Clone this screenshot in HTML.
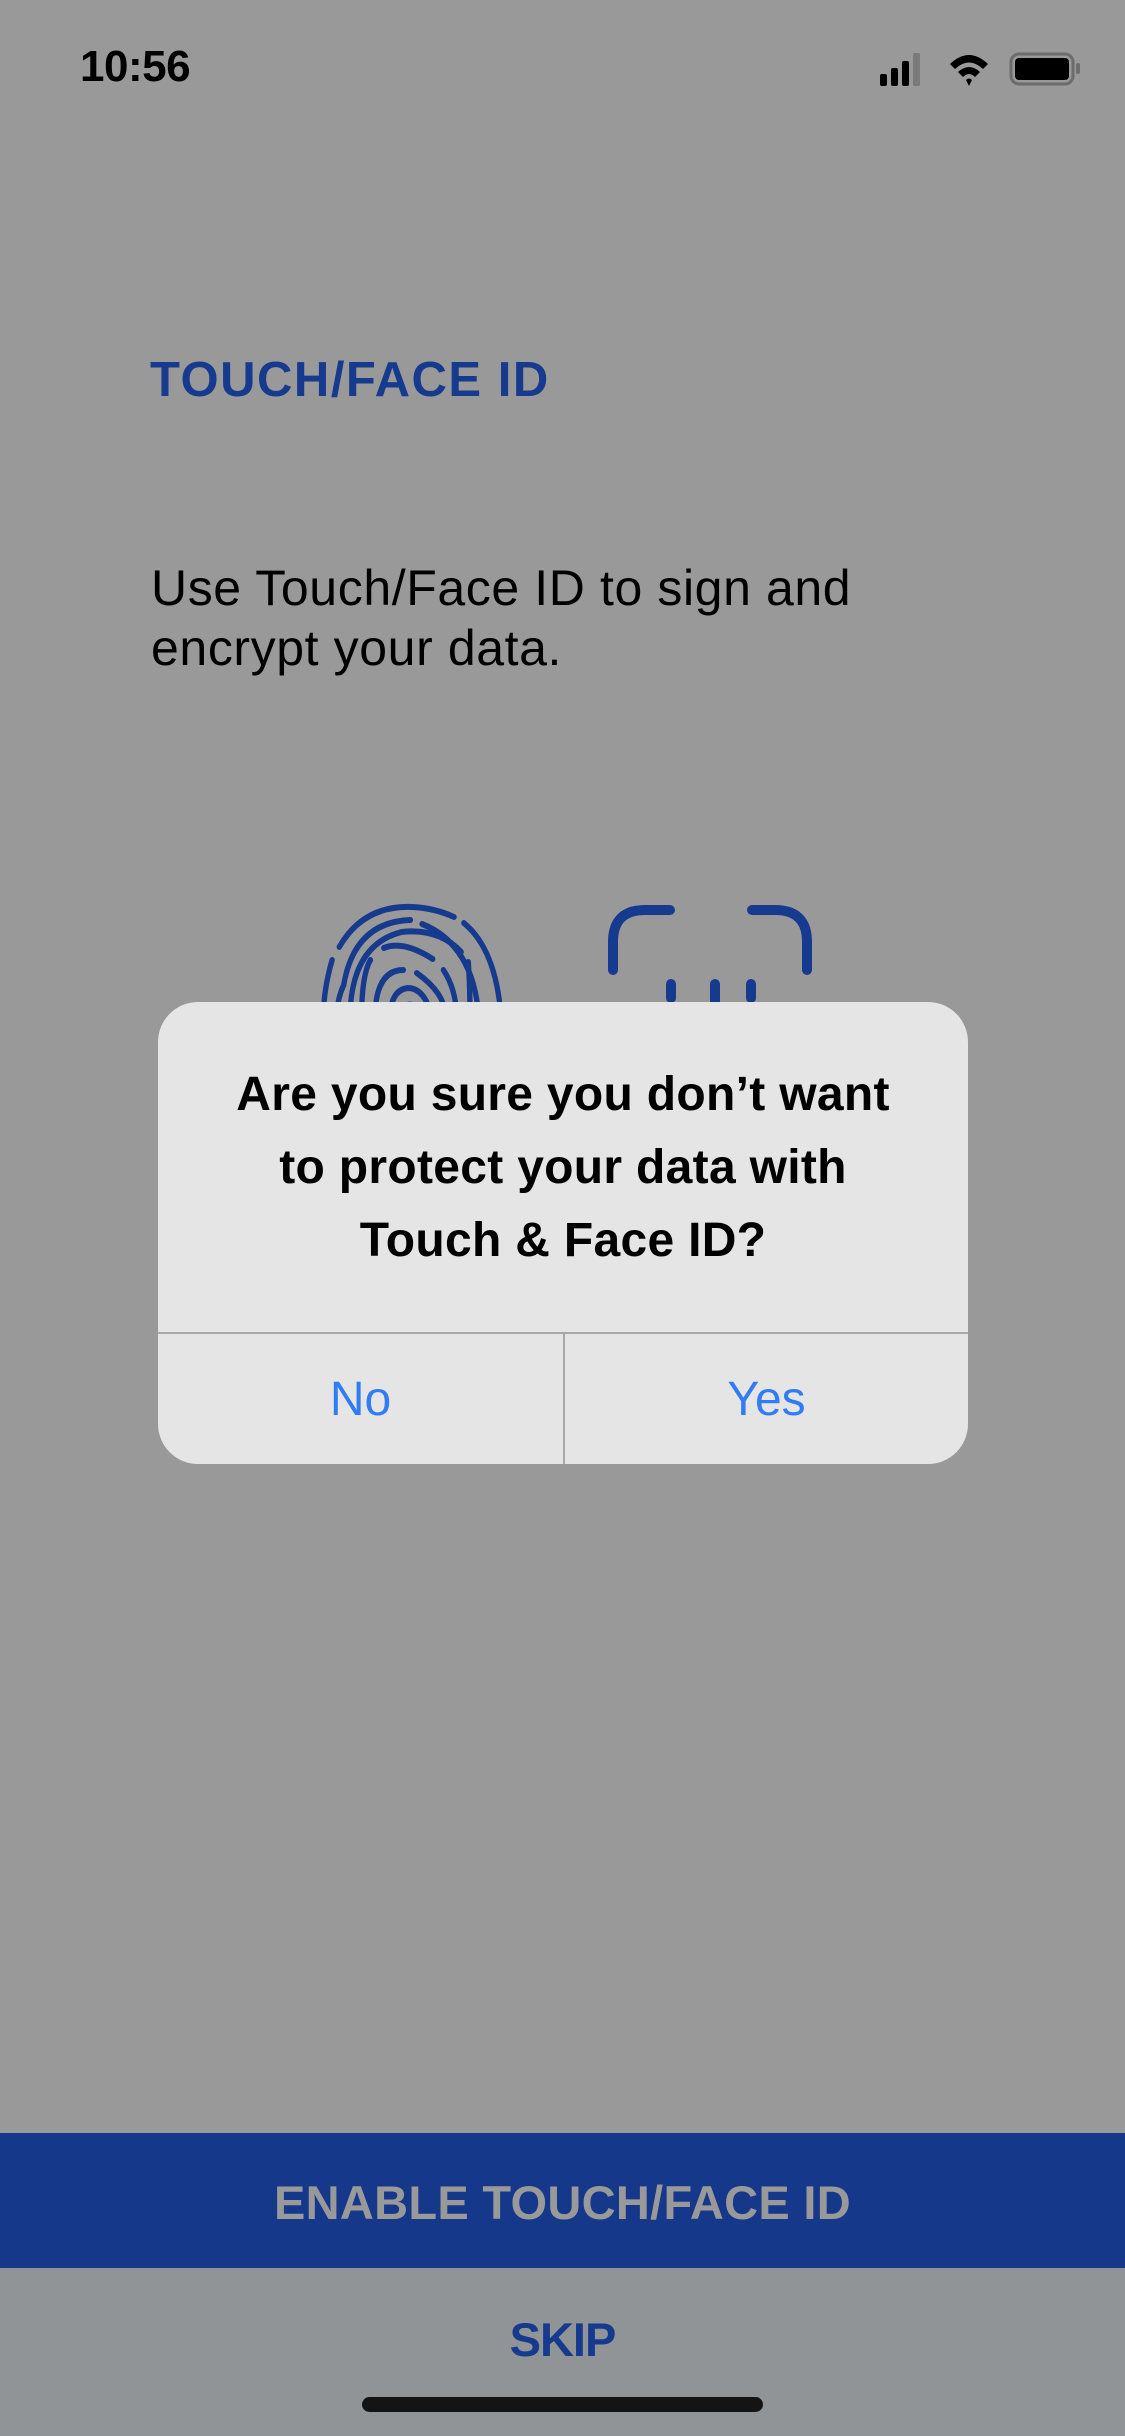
<!DOCTYPE html>
<html><head><meta charset="utf-8"><style>
*{margin:0;padding:0;box-sizing:border-box}
body{width:1125px;height:2436px;background:#999999;position:relative;overflow:hidden;font-family:"Liberation Sans",sans-serif}
.abs{position:absolute}
</style></head><body>
<div class="abs" style="left:80px;top:42px;font-size:44px;font-weight:600;color:#000;letter-spacing:-0.5px">10:56</div>
<svg class="abs" style="left:880px;top:50px" width="210" height="40" viewBox="0 0 210 40">
<rect x="0" y="24" width="7" height="12" rx="2" fill="#000"/>
<rect x="11" y="18" width="7" height="18" rx="2" fill="#000"/>
<rect x="22" y="11" width="7" height="25" rx="2" fill="#000"/>
<rect x="33" y="3" width="7" height="33" rx="2" fill="#7a7a7a"/>
<path d="M70 14 Q89 -4 108 14 L103 19 Q89 6 75 19Z M78 22 Q89 12 100 22 L95 27 Q89 21 83 27Z M86 30 Q89 27 92 30 L89 36Z" fill="#000"/>
<rect x="131" y="4" width="62" height="30" rx="8" fill="none" stroke="#6c6c6c" stroke-width="3"/>
<rect x="135" y="8" width="54" height="22" rx="4" fill="#000"/>
<rect x="196" y="13" width="4" height="11" rx="2" fill="#6c6c6c"/>
</svg>
<div class="abs" style="left:150px;top:352px;font-size:49px;font-weight:700;color:#163a8e;letter-spacing:1.5px">TOUCH/FACE ID</div>
<div class="abs" style="left:151px;top:558px;font-size:50px;line-height:60px;color:#000;font-weight:300;letter-spacing:0.6px">Use Touch/Face ID to sign and<br>encrypt your data.</div>
<svg class="abs" style="left:300px;top:880px" width="560" height="140" viewBox="0 0 560 140">
<g fill="none" stroke="#163a8e" stroke-width="6" stroke-linecap="round" transform="translate(1,0) scale(0.89,1)">
<path d="M43 67 Q70 25 125 27 Q150 28 172 37"/>
<path d="M183 43 Q220 70 225 140"/>
<path d="M35 80 Q25 110 25 140"/>
<path d="M48 105 Q60 42 123 40"/>
<path d="M136 44 Q195 65 200 140"/>
<path d="M40 140 Q40 120 48 105"/>
<path d="M55 140 Q55 65 113 52 Q155 48 180 72"/>
<path d="M188 82 Q190 110 190 140"/>
<path d="M93 68 Q115 60 148 79"/>
<path d="M78 80 Q68 95 68 140"/>
<path d="M83 140 Q83 90 115 90"/>
<path d="M130 93 Q165 115 162 140"/>
<path d="M160 90 Q175 110 175 140"/>
<path d="M100 140 Q100 110 120 108 Q140 108 148 140"/>
<path d="M113 140 Q115 122 125 125 Q135 130 133 140"/>
</g>
<g fill="none" stroke="#163a8e" stroke-width="10" stroke-linecap="round">
<path d="M313 90 V62 Q313 30 345 30 H370"/>
<path d="M452 30 H475 Q507 30 507 62 V90"/>
<path d="M371 104 V118"/><path d="M415 104 V140"/><path d="M451 104 V118"/>
</g>
</svg>
<div class="abs" style="left:158px;top:1002px;width:810px;height:462px;background:#e5e5e6;border-radius:40px;overflow:hidden">
<div style="position:absolute;top:56px;width:100%;text-align:center;font-size:48px;line-height:73px;font-weight:700;color:#000;letter-spacing:0.3px">Are you sure you don’t want<br>to protect your data with<br>Touch &amp; Face ID?</div>
<div style="position:absolute;top:330px;left:0;width:100%;height:2px;background:#a8a8a8"></div>
<div style="position:absolute;top:331px;left:405px;width:2px;height:131px;background:#a8a8a8"></div>
<div style="position:absolute;top:370px;left:0;width:405px;text-align:center;font-size:48px;color:#2f7cf6">No</div>
<div style="position:absolute;top:370px;left:407px;width:403px;text-align:center;font-size:48px;color:#2f7cf6">Yes</div>
</div>
<div class="abs" style="left:0;top:2133px;width:1125px;height:135px;background:#15388a"></div>
<div class="abs" style="left:0;top:2175px;width:1125px;text-align:center;font-size:47px;font-weight:700;color:#999;letter-spacing:0.3px">ENABLE TOUCH/FACE ID</div>
<div class="abs" style="left:0;top:2268px;width:1125px;height:168px;background:#909497"></div>
<div class="abs" style="left:0;top:2312px;width:1125px;text-align:center;font-size:47px;font-weight:700;color:#163a8e;letter-spacing:-1px">SKIP</div>
<div class="abs" style="left:362px;top:2397px;width:401px;height:15px;border-radius:8px;background:#141414"></div>
</body></html>
